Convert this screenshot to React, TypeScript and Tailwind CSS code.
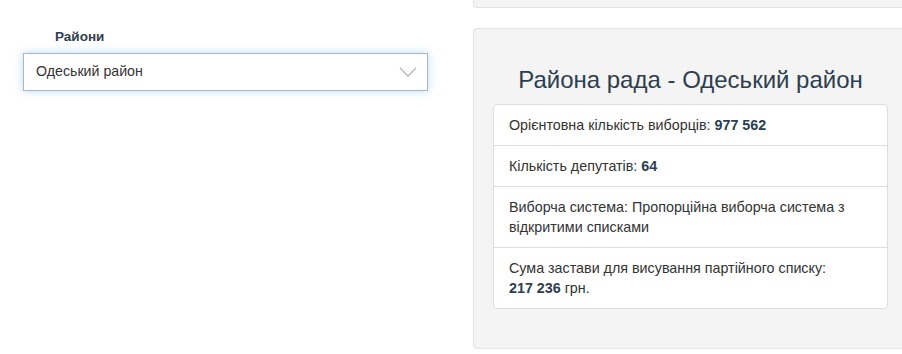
import React from 'react';

const rows: { key: string; content: React.ReactNode }[] = [
  {
    key: 'voters',
    content: (
      <>
        Орієнтовна кількість виборців: <b className="text-[#2c3e50]">977 562</b>
      </>
    )
  },
  {
    key: 'deputies',
    content: (
      <>
        Кількість депутатів: <b className="text-[#2c3e50]">64</b>
      </>
    )
  },
  {
    key: 'system',
    content: <>Виборча система: Пропорційна виборча система з відкритими списками</>
  },
  {
    key: 'deposit',
    content: (
      <>
        Сума застави для висування партійного списку:
        <br />
        <b className="text-[#2c3e50]">217 236</b> грн.
      </>
    )
  }
];

export default function App() {
  return (
    <div
      className="flex h-[354px] w-[902px] overflow-hidden bg-white text-[#333]"
      style={{ fontFamily: '"Liberation Sans", Arial, sans-serif' }}
    >
      <div className="w-[473px] shrink-0 pl-[23px] pt-[29px]">
        <div className="pl-[32px] text-[13.5px] font-bold leading-[16px] text-[#2c3e50]">Райони</div>
        <div className="mt-[8px] flex h-[38px] w-[405px] items-center justify-between border border-[#a9b8c8] bg-white pl-[12px] pr-[10px] shadow-[0_0_8px_rgba(102,175,233,0.45)]">
          <span className="text-[14.2px] text-[#333]">Одеський район</span>
          <svg width="18" height="10" viewBox="0 0 18 10" fill="none">
            <path d="M1 1l8 8 8-8" stroke="#b5b5b5" strokeWidth="1.3" />
          </svg>
        </div>
      </div>

      <div className="flex w-[435px] shrink-0 flex-col">
        <div className="h-[8px] rounded-b-[4px] border border-t-0 border-[#e3e3e3] bg-[#f4f4f4]" />
        <div className="mt-[20px] h-[321px] rounded-[4px] border border-[#e3e3e3] bg-[#f4f4f4] px-[19px]">
          <h2 className="pb-[11px] pt-[38px] text-center text-[24px] leading-[26px] text-[#2c3e50]">
            Районa рада - Одеський район
          </h2>
          <ul className="rounded-[4px] border border-[#ddd] bg-white">
            {rows.map((r, i) => (
              <li
                key={r.key}
                className={`px-[15px] py-[10px] text-[14.3px] leading-[20px] ${i > 0 ? 'border-t border-[#ddd]' : ''}`}
              >
                {r.content}
              </li>
            ))}
          </ul>
        </div>
      </div>
    </div>
  );
}
